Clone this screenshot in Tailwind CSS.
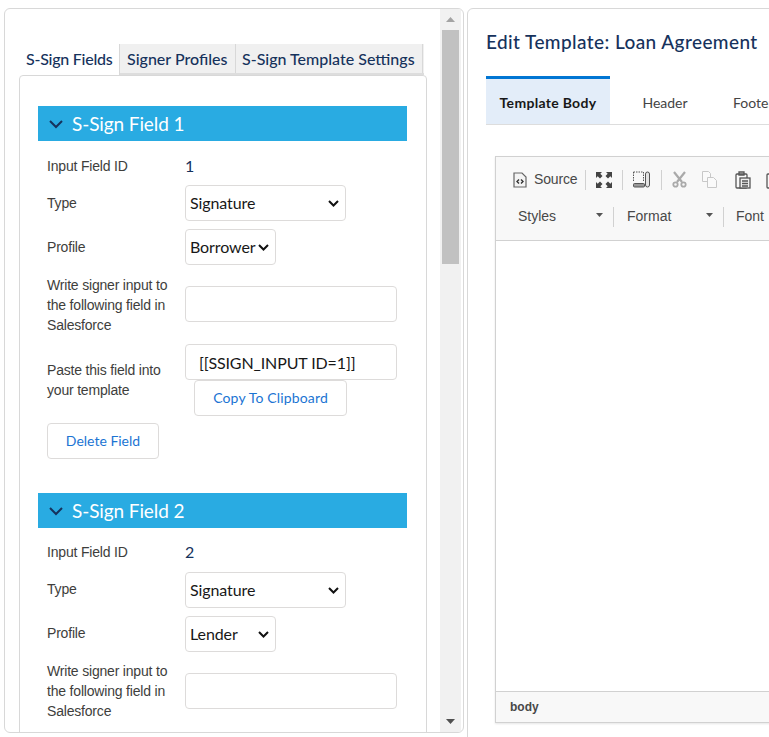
<!DOCTYPE html>
<html lang="en">
<head>
<meta charset="UTF-8">
<title>Edit Template</title>
<script src="https://cdn.jsdelivr.net/npm/@tailwindcss/browser@4"></script>
</head>
<body class="bg-white h-[737px] w-[769px] overflow-hidden font-['Lato','Liberation_Sans',sans-serif] text-[#181818]">
<div class="flex items-start pt-[8px] pl-[4px] gap-[3px] h-[737px] overflow-hidden">

  <!-- left panel -->
  <div class="flex w-[460px] h-[725px] shrink-0 border border-[#d8d8d8] rounded-[6px] overflow-hidden">
    <div class="w-[435px] shrink-0 h-full overflow-hidden pl-[14px] pt-[35px]">
      <div class="flex h-[31px] w-[405px] text-[16px] font-medium text-[#16325c] bg-[#f0f0f0] border-b-[2px] border-[#dddddd]">
        <div class="w-[101px] h-[31px] bg-white border-r border-[#d8d8d8] pl-[7px] leading-[30px] tracking-[-0.25px]">S-Sign Fields</div>
        <div class="w-[116px] border-r border-[#d8d8d8] pl-[7px] leading-[30px]">Signer Profiles</div>
        <div class="w-[187px] border-r border-[#d8d8d8] pl-[6px] leading-[30px] whitespace-nowrap">S-Sign Template Settings</div>
      </div>
      <div class="w-[408px] border border-[#d8d8d8] rounded-t-[4px] pt-[30px] px-[18px] h-[700px] font-['Liberation_Sans',sans-serif] text-[14px] tracking-[-0.19px] text-[#3e3e3c]">

        <div class="flex items-center h-[35px] w-[369px] bg-[#29abe2] text-white pl-[11px] gap-[9px] text-[19px] tracking-[-0.1px] font-['Lato',sans-serif]">
          <svg width="14" height="10" viewBox="0 0 14 10" fill="none" stroke="#16325c" stroke-width="2"><path d="M1 2l6 6 6-6"/></svg>
          <span class="pt-[2px]">S-Sign Field 1</span>
        </div>
        <div class="pl-[9px]">
          <div class="flex h-[40px] items-start pt-[16px]">
            <div class="w-[138px] leading-[18px]">Input Field ID</div>
            <div class="text-[16px] leading-[18px] text-[#16325c] font-['Lato',sans-serif]">1</div>
          </div>
          <div class="flex h-[44px] items-center">
            <div class="w-[138px] leading-[18px]">Type</div>
            <div class="relative">
              <select class="block appearance-none w-[161px] h-[36px] border border-[#dddbda] rounded-[4px] bg-white pl-[4px] text-[16px] tracking-[-0.1px] text-[#181818] font-['Lato',sans-serif]"><option>Signature</option></select>
              <svg class="absolute right-[7px] top-[15px]" width="11" height="7" viewBox="0 0 11 7" fill="none" stroke="#111" stroke-width="2"><path d="M1 1l4.500 4.500L10 1"/></svg>
            </div>
          </div>
          <div class="flex h-[44px] items-center">
            <div class="w-[138px] leading-[18px]">Profile</div>
            <div class="relative">
              <select class="block appearance-none w-[91px] h-[36px] border border-[#dddbda] rounded-[4px] bg-white pl-[4px] text-[16px] tracking-[-0.1px] text-[#181818] font-['Lato',sans-serif]"><option>Borrower</option></select>
              <svg class="absolute right-[7px] top-[15px]" width="11" height="7" viewBox="0 0 11 7" fill="none" stroke="#111" stroke-width="2"><path d="M1 1l4.500 4.500L10 1"/></svg>
            </div>
          </div>
          <div class="flex h-[66px] items-center mt-[2px]">
            <div class="w-[138px] leading-[20px] pt-[2px]">Write signer input to<br>the following field in<br>Salesforce</div>
            <div class="w-[212px] h-[36px] border border-[#dddbda] rounded-[4px] bg-white"></div>
          </div>
          <div class="flex mt-[7px]">
            <div class="w-[138px] leading-[20px] pt-[16px]">Paste this field into<br>your template</div>
            <div>
              <div class="w-[212px] h-[36px] border border-[#dddbda] rounded-[4px] bg-white pl-[13px] leading-[36px] text-[16px] tracking-[-0.12px] text-[#181818] font-['Lato',sans-serif] whitespace-nowrap">[[SSIGN_INPUT ID=1]]</div>
              <div class="ml-[9px] w-[153px] h-[36px] border border-[#dddbda] rounded-[4px] bg-white text-center leading-[34px] tracking-[0.15px] text-[#1b74d3] font-['Lato',sans-serif]">Copy To Clipboard</div>
            </div>
          </div>
          <div class="w-[112px] h-[36px] mt-[7px] border border-[#dddbda] rounded-[4px] bg-white text-center leading-[34px] tracking-[0px] text-[#1b74d3] font-['Lato',sans-serif]">Delete Field</div>
        </div>

        <div class="flex items-center h-[35px] w-[369px] bg-[#29abe2] text-white pl-[11px] gap-[9px] text-[19px] tracking-[-0.1px] font-['Lato',sans-serif] mt-[34px]">
          <svg width="14" height="10" viewBox="0 0 14 10" fill="none" stroke="#16325c" stroke-width="2"><path d="M1 2l6 6 6-6"/></svg>
          <span class="pt-[2px]">S-Sign Field 2</span>
        </div>
        <div class="pl-[9px]">
          <div class="flex h-[40px] items-start pt-[15px]">
            <div class="w-[138px] leading-[18px]">Input Field ID</div>
            <div class="text-[16px] leading-[18px] text-[#16325c] font-['Lato',sans-serif]">2</div>
          </div>
          <div class="flex h-[44px] items-center">
            <div class="w-[138px] leading-[18px] pb-[2px]">Type</div>
            <div class="relative">
              <select class="block appearance-none w-[161px] h-[36px] border border-[#dddbda] rounded-[4px] bg-white pl-[4px] text-[16px] tracking-[-0.1px] text-[#181818] font-['Lato',sans-serif]"><option>Signature</option></select>
              <svg class="absolute right-[7px] top-[15px]" width="11" height="7" viewBox="0 0 11 7" fill="none" stroke="#111" stroke-width="2"><path d="M1 1l4.500 4.500L10 1"/></svg>
            </div>
          </div>
          <div class="flex h-[44px] items-center">
            <div class="w-[138px] leading-[18px] pb-[2px]">Profile</div>
            <div class="relative">
              <select class="block appearance-none w-[91px] h-[36px] border border-[#dddbda] rounded-[4px] bg-white pl-[4px] text-[16px] tracking-[-0.1px] text-[#181818] font-['Lato',sans-serif]"><option>Lender</option></select>
              <svg class="absolute right-[7px] top-[15px]" width="11" height="7" viewBox="0 0 11 7" fill="none" stroke="#111" stroke-width="2"><path d="M1 1l4.500 4.500L10 1"/></svg>
            </div>
          </div>
          <div class="flex h-[66px] items-center mt-[2px]">
            <div class="w-[138px] leading-[20px]">Write signer input to<br>the following field in<br>Salesforce</div>
            <div class="w-[212px] h-[36px] border border-[#dddbda] rounded-[4px] bg-white"></div>
          </div>
        </div>
      </div>
    </div>
    <!-- scrollbar -->
    <div class="w-[21px] shrink-0 h-full bg-[#f1f1f1] flex flex-col items-center">
      <div class="h-[21px] flex items-center justify-center shrink-0">
        <svg width="9" height="5" viewBox="0 0 9 5"><path d="M4.5 0L9 5H0z" fill="#a3a3a3"/></svg>
      </div>
      <div class="w-[17px] h-[234px] bg-[#c1c1c1] shrink-0"></div>
      <div class="flex-1"></div>
      <div class="h-[21px] flex items-center justify-center shrink-0">
        <svg width="9" height="5" viewBox="0 0 9 5"><path d="M4.5 5L9 0H0z" fill="#505050"/></svg>
      </div>
    </div>
  </div>

  <!-- right panel -->
  <div class="w-[400px] shrink-0 h-[800px] border border-[#d8d8d8] rounded-[6px] pl-[18px] overflow-hidden">
    <div class="text-[19px] leading-[24px] pt-[21px] font-medium text-[#16325c] tracking-[0.41px] whitespace-nowrap">Edit Template: Loan Agreement</div>
    <div class="flex mt-[22px] h-[49px] w-[400px] border-b border-[#dddddd] text-[14px] text-[#444444]">
      <div class="w-[124px] h-[48px] bg-[#e3edf9] border-t-[3px] border-[#0176d3] text-center leading-[47px] font-bold text-[#181818] text-[14px] tracking-[0.3px]">Template Body</div>
      <div class="w-[123px] text-center leading-[54px] pr-[13px]">Header</div>
      <div class="text-center leading-[54px]">Footer</div>
    </div>
    <!-- editor -->
    <div class="ml-[9px] mt-[31px] w-[400px] h-[567px] border border-[#d1d1d1] shadow-[0_1px_2px_rgba(0,0,0,0.1)] flex flex-col font-['Liberation_Sans',sans-serif]">
      <div class="h-[84px] shrink-0 bg-[#f8f8f8] border-b border-[#d1d1d1] text-[14px] text-[#484848] overflow-hidden">
        <div class="flex items-center h-[31px] mt-[7px] pl-[17px]">
          <svg width="14" height="16" viewBox="0 0 14 16" fill="#f4f4f4" stroke="#666" stroke-width="1.2"><path d="M1 1h8l4 4v10H1z"/><path d="M6 7.500L4 9.500l2 2M8 7.500l2 2-2 2" fill="none" stroke="#333" stroke-width="1.400"/></svg>
          <span class="ml-[7px] tracking-[-0.15px]">Source</span>
          <span class="w-px h-[20px] bg-[#d1d1d1] ml-[8px]"></span>
          <!-- maximize: four outward corner arrows -->
          <svg class="ml-[10px]" width="16" height="16" viewBox="0 0 16 16" fill="#444"><path d="M0 0h6L4.300 1.700 6.500 4 4 6.500 1.700 4.300 0 6zM16 0v6l-1.700-1.700L12 6.500 9.500 4l2.200-2.300L10 0zM0 16v-6l1.700 1.700L4 9.500 6.500 12l-2.200 2.300L6 16zM16 16h-6l1.700-1.700L9.500 12 12 9.500l2.300 2.200L16 10z"/></svg>
          <span class="w-px h-[20px] bg-[#d1d1d1] ml-[10px]"></span>
          <!-- show blocks -->
          <svg class="ml-[10px]" width="17" height="17" viewBox="0 0 17 17" fill="none" stroke="#555"><path d="M0.500 1h10M0.500 1v10M10.500 1v10" stroke-dasharray="1.500 1"/><rect x="0.500" y="12.500" width="11" height="3.500" rx="1" fill="#999"/><rect x="12.500" y="1" width="4" height="15" rx="2" fill="#e4e4e4"/></svg>
          <span class="w-px h-[20px] bg-[#d1d1d1] ml-[11px]"></span>
          <svg class="ml-[10px]" width="15" height="17" viewBox="0 0 15 17" fill="none" stroke="#aaa" stroke-width="2.200"><path d="M2 1l8 10M13 1L5 11"/><circle cx="3.500" cy="13.500" r="2.200" stroke-width="1.800"/><circle cx="11.500" cy="13.500" r="2.200" stroke-width="1.800"/></svg>
          <svg class="ml-[15px]" width="15" height="17" viewBox="0 0 15 17" fill="#fafafa" stroke="#c8c8c8"><path d="M0.500 0.500h6l2 2v8h-8z"/><path d="M5.500 6.500h6l3 3v7h-9z"/></svg>
          <svg class="ml-[18px]" width="16" height="18" viewBox="0 0 16 18" fill="none" stroke="#555" stroke-width="1.300"><rect x="1" y="3" width="11" height="14" rx="1"/><rect x="5" y="7" width="10" height="10" fill="#eee"/><path d="M4 1h5v3H4zM7 10h6M7 12.500h6M7 15h6"/></svg>
          <svg class="ml-[15px]" width="16" height="18" viewBox="0 0 16 18" fill="none" stroke="#555" stroke-width="1.300"><rect x="1" y="3" width="14" height="14" rx="1"/></svg>
        </div>
        <div class="flex items-center h-[31px] mt-[6px]">
          <span class="w-[117px] pl-[22px] relative">Styles<svg class="absolute right-[10px] top-[7px]" width="7" height="4" viewBox="0 0 7 4"><path d="M0 0h7L3.500 4z" fill="#555"/></svg></span>
          <span class="w-px h-[20px] bg-[#d1d1d1]"></span>
          <span class="w-[109px] pl-[13px] relative">Format<svg class="absolute right-[10px] top-[7px]" width="7" height="4" viewBox="0 0 7 4"><path d="M0 0h7L3.500 4z" fill="#555"/></svg></span>
          <span class="w-px h-[20px] bg-[#d1d1d1]"></span>
          <span class="pl-[12px]">Font</span>
        </div>
      </div>
      <div class="flex-1 bg-white"></div>
      <div class="h-[31px] shrink-0 bg-[#f8f8f8] border-t border-[#d1d1d1] pl-[14px] text-[12px] font-bold leading-[30px] text-[#484848]">body</div>
    </div>
  </div>
</div>
</body>
</html>
